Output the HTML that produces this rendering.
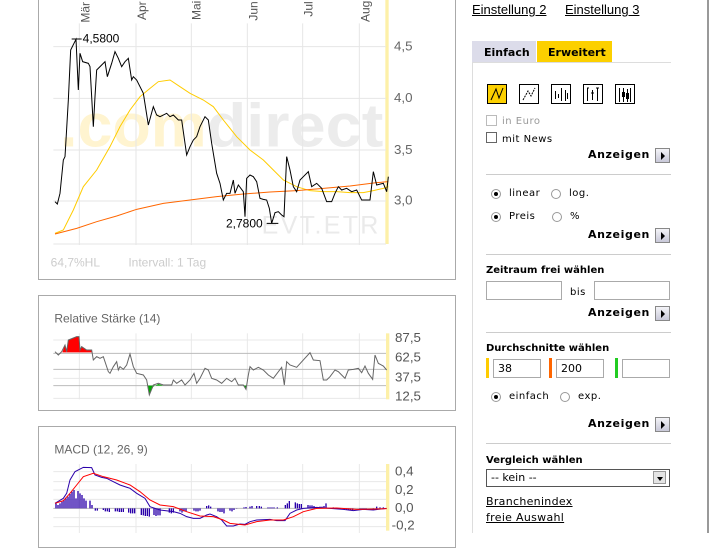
<!DOCTYPE html>
<html><head><meta charset="utf-8"><style>
body{margin:0;width:709px;height:533px;overflow:hidden;background:#fff;font-family:"DejaVu Sans","Liberation Sans",sans-serif;position:relative}
.a{position:absolute}
.box{position:absolute;border:1px solid #aaa;background:#fff}
.lk{position:absolute;font-family:"Liberation Sans",sans-serif;font-size:13px;text-decoration:underline;color:#000}
.sm{position:absolute;font-size:10px;color:#000;letter-spacing:0.5px}
.b{position:absolute;font-size:10px;font-weight:bold;color:#000}
.anz{position:absolute;left:588px;font-size:11px;font-weight:bold;letter-spacing:0.6px}
.btn{position:absolute;left:655px;width:13px;height:13px;border:1px solid #888;background:linear-gradient(#f4f4f8,#c8c8d8)}
.btn:after{content:"";position:absolute;left:5px;top:3px;border-left:4px solid #000;border-top:4px solid transparent;border-bottom:4px solid transparent}
.sep{position:absolute;left:486px;width:185px;height:1px;background:#ccc}
.inp{position:absolute;height:17px;border:1px solid #aaa;background:#fff;font-size:11px;line-height:17px;padding-left:4px;box-sizing:border-box}
.rad{position:absolute;width:10px;height:10px;border-radius:50%;border:1px solid #999;background:#fff;box-sizing:border-box}
.rad.on:after{content:"";position:absolute;left:2px;top:2px;width:4px;height:4px;border-radius:50%;background:#000}
.cb{position:absolute;width:11px;height:11px;border:1px solid #666;box-sizing:border-box;background:#fff}
.ic{position:absolute;top:84px;width:20px;height:20px;border:1px solid #000;box-sizing:border-box}
</style></head><body>
<div class="box" style="left:38px;top:-2px;width:416px;height:280px"></div>
<div class="box" style="left:38px;top:295px;width:416px;height:114px"></div>
<div class="box" style="left:38px;top:426px;width:416px;height:120px"></div>

<svg class="a" style="left:30px;top:0" width="430" height="280" viewBox="0 0 1290 840">
<text x="90" y="440" font-family="Liberation Sans" font-weight="bold" font-size="185" fill="#fff4d0" textLength="440" lengthAdjust="spacingAndGlyphs">.com</text>
<text x="530" y="440" font-family="Liberation Sans" font-weight="bold" font-size="185" fill="#ececec" textLength="530" lengthAdjust="spacingAndGlyphs">direct</text>
<text x="695" y="700" font-family="Liberation Sans" font-size="75" fill="#eaeaea" textLength="350">EVT.ETR</text>
<rect x="1066" y="0" width="10" height="732" fill="#fdf0a8"/>
<g stroke="#e6e6e6" stroke-width="3">
<line x1="70" y1="140" x2="1068" y2="140"/><line x1="70" y1="295" x2="1068" y2="295"/><line x1="70" y1="450" x2="1068" y2="450"/><line x1="70" y1="603" x2="1068" y2="603"/><line x1="70" y1="732" x2="1068" y2="732"/>
<line x1="148" y1="70" x2="148" y2="735"/><line x1="318" y1="70" x2="318" y2="735"/><line x1="484" y1="70" x2="484" y2="735"/><line x1="652" y1="70" x2="652" y2="735"/><line x1="818" y1="70" x2="818" y2="735"/><line x1="988" y1="70" x2="988" y2="735"/>
</g>
<g font-family="Liberation Sans" font-size="36" fill="#555">
<text transform="translate(178,68) rotate(-90)">Mär</text><text transform="translate(348,60) rotate(-90)">Apr</text><text transform="translate(512,60) rotate(-90)">Mai</text><text transform="translate(682,62) rotate(-90)">Jun</text><text transform="translate(848,50) rotate(-90)">Jul</text><text transform="translate(1018,66) rotate(-90)">Aug</text>
</g>
<g font-family="Liberation Sans" font-size="40" fill="#666">
<text x="1092" y="152">4,5</text><text x="1092" y="306">4,0</text><text x="1092" y="462">3,5</text><text x="1092" y="614">3,0</text>
</g>
<polyline fill="none" stroke="#fc0" stroke-width="3" points="75,700 100,690 130,630 160,560 200,510 240,440 270,380 300,330 330,290 360,265 385,245 420,240 450,260 480,280 520,300 550,320 580,360 620,410 660,450 700,480 730,510 760,540 800,560 840,572 880,575 920,575 960,578 1000,578 1030,572 1060,565 1075,560"/>
<polyline fill="none" stroke="#f60" stroke-width="3" points="75,702 140,685 200,665 260,648 320,628 400,610 480,600 560,590 640,582 720,576 800,572 880,565 960,558 1040,548 1075,545"/>
<polyline fill="none" stroke="#000" stroke-width="3" points="75,605 82,612 90,580 100,480 105,470 108,420 115,300 122,150 138,118 145,270 150,160 158,185 175,190 180,200 190,380 195,290 200,210 215,195 225,185 232,230 245,190 255,155 265,175 275,200 285,185 295,175 305,240 310,230 320,240 340,280 355,375 370,320 380,345 390,350 410,340 420,350 430,345 445,360 455,360 470,465 480,440 490,420 500,410 510,380 525,350 535,360 545,430 560,520 570,550 580,600 590,580 600,580 610,540 615,580 625,555 640,575 645,650 650,535 660,525 670,530 680,545 690,595 700,598 710,600 718,625 725,670 735,638 745,635 755,645 762,650 770,470 780,510 790,560 800,575 810,540 820,530 835,515 845,560 860,550 875,565 890,605 905,605 915,580 925,560 935,570 950,565 965,575 980,570 995,600 1020,600 1030,515 1040,555 1060,550 1070,575 1075,530"/>
<path d="M125 117H155M710 670H745" stroke="#000" stroke-width="3"/>
<g font-family="Liberation Sans" font-size="36" fill="#000"><text x="158" y="127">4,5800</text><text x="588" y="682">2,7800</text></g>
<g font-family="Liberation Sans" font-size="36" fill="#ccc"><text x="62" y="800">64,7%HL</text><text x="295" y="800">Intervall: 1 Tag</text></g>
</svg>

<svg class="a" style="left:30px;top:290px" width="430" height="243" viewBox="0 0 1290 729">
<text x="73" y="98" font-family="Liberation Sans" font-size="36" fill="#666">Relative Stärke (14)</text>
<rect x="1068" y="130" width="10" height="198" fill="#fdf0a8"/>
<g stroke="#e8e8e8" stroke-width="3">
<line x1="70" y1="150" x2="1068" y2="150"/><line x1="70" y1="265" x2="1068" y2="265"/><line x1="70" y1="325" x2="1068" y2="325"/>
<line x1="148" y1="130" x2="148" y2="328"/><line x1="318" y1="130" x2="318" y2="328"/><line x1="484" y1="130" x2="484" y2="328"/><line x1="652" y1="130" x2="652" y2="328"/><line x1="818" y1="130" x2="818" y2="328"/><line x1="988" y1="130" x2="988" y2="328"/>
</g>
<g stroke="#bbb" stroke-width="3"><line x1="70" y1="190" x2="1068" y2="190"/><line x1="70" y1="238" x2="1068" y2="238"/><line x1="70" y1="287" x2="1068" y2="287"/></g>
<polygon fill="#f00" points="97,187 105,165 110,187 115,150 140,140 147,140 150,180 155,170 170,180 185,180 187,187"/>
<polygon fill="#0a0" points="352,287 358,315 370,290 385,282 400,287 425,287"/>
<polygon fill="#0a0" points="622,287 625,287 640,287 648,298 650,287"/>
<polyline fill="none" stroke="#666" stroke-width="3" points="75,185 85,195 95,185 105,165 110,185 115,150 140,140 147,140 150,180 155,170 170,180 185,180 190,210 200,200 210,205 220,200 235,245 240,250 250,230 260,215 265,240 270,230 280,238 290,225 300,192 310,230 320,250 340,255 350,270 358,315 370,285 385,280 400,285 425,285 430,270 440,280 455,270 465,285 480,270 492,250 500,280 510,265 525,235 535,240 545,265 560,270 575,280 590,265 605,275 615,265 625,285 640,285 648,298 655,255 660,230 670,240 685,232 700,240 715,255 730,265 755,232 763,285 770,215 780,225 800,232 840,188 850,210 870,212 880,270 890,270 900,260 915,240 925,245 935,255 945,265 955,240 970,238 985,235 995,248 1005,228 1015,250 1028,268 1035,195 1045,220 1060,228 1070,240"/>
<g font-family="Liberation Sans" font-size="40" fill="#555"><text x="1095" y="156">87,5</text><text x="1095" y="215">62,5</text><text x="1095" y="274">37,5</text><text x="1095" y="332">12,5</text></g>

<text x="73" y="490" font-family="Liberation Sans" font-size="36" fill="#666">MACD (12, 26, 9)</text>
<rect x="1068" y="522" width="10" height="200" fill="#fdf0a8"/>
<g stroke="#e8e8e8" stroke-width="3">
<line x1="70" y1="545" x2="1068" y2="545"/><line x1="70" y1="575" x2="1068" y2="575"/><line x1="70" y1="600" x2="1068" y2="600"/><line x1="70" y1="628" x2="1068" y2="628"/><line x1="70" y1="683" x2="1068" y2="683"/><line x1="70" y1="710" x2="1068" y2="710"/>
<line x1="148" y1="522" x2="148" y2="729"/><line x1="318" y1="522" x2="318" y2="729"/><line x1="484" y1="522" x2="484" y2="729"/><line x1="652" y1="522" x2="652" y2="729"/><line x1="818" y1="522" x2="818" y2="729"/><line x1="988" y1="522" x2="988" y2="729"/>
</g>
<line x1="70" y1="655" x2="1068" y2="655" stroke="#bbb" stroke-width="3"/>
<path stroke="#2a00aa" stroke-width="4" d="M78 655V640M84 655V645M90 655V640M96 655V635M102 655V630M108 655V625M114 655V620M120 655V612M126 655V605M132 655V600M138 655V625M144 655V603M150 655V610M156 655V615M162 655V625M168 655V632M180 655V632M186 655V645M196 655V662M202 655V662M220 655V660M226 655V664M232 655V664M238 655V666M256 655V664M262 655V664M268 655V666M274 655V666M280 655V666M296 655V668M302 655V670M308 655V670M314 655V670M334 655V675M340 655V676M346 655V678M352 655V678M358 655V680M372 655V675M378 655V678M384 655V676M390 655V676M418 655V668M424 655V670M430 655V668M450 655V664M456 655V668M462 655V664M468 655V664M492 655V662M498 655V664M504 655V664M510 655V662M530 655V648M536 655V646M542 655V650M564 655V664M570 655V666M576 655V666M582 655V670M600 655V662M606 655V664M612 655V660M620 655V656M642 655V652M648 655V651M660 655V650M666 655V648M680 655V648M688 655V648M694 655V650M714 655V652M720 655V652M726 655V652M732 655V652M742 655V652M766 655V645M772 655V640M778 655V633M796 655V637M802 655V640M808 655V642M814 655V642M834 655V645M840 655V646M846 655V646M852 655V648M870 655V650M876 655V650M882 655V648M888 655V640M910 655V652M930 655V657M950 655V660M956 655V660M962 655V660M968 655V660M990 655V658M996 655V658M1002 655V657M1008 655V658M1030 655V660M1040 655V650M1050 655V652M1060 655V652"/>
<polyline fill="none" stroke="#2a00aa" stroke-width="3" points="75,640 100,625 110,610 120,570 135,545 160,532 185,533 195,555 215,562 230,565 250,575 270,585 300,595 320,610 345,625 360,650 390,660 430,665 450,670 470,680 490,685 510,685 530,675 540,672 560,680 575,690 590,708 610,708 630,702 645,703 660,695 680,690 720,688 740,692 765,692 780,670 800,660 820,655 860,652 900,655 940,658 970,662 1000,658 1030,660 1070,655"/>
<polyline fill="none" stroke="#f00" stroke-width="3" points="75,640 100,632 120,610 140,585 160,560 190,550 220,560 260,570 300,585 330,605 360,630 390,645 430,650 470,665 510,678 550,680 580,690 600,700 645,705 680,695 720,690 760,690 790,680 820,665 860,655 920,654 980,658 1040,657 1070,656"/>
<g font-family="Liberation Sans" font-size="40" fill="#555"><text x="1095" y="557">0,4</text><text x="1095" y="612">0,2</text><text x="1095" y="666">0,0</text><text x="1085" y="718">-0,2</text></g>
</svg>

<div class="a" style="left:707px;top:0;width:2px;height:533px;background:#999"></div>
<div class="lk" style="left:472px;top:2px">Einstellung 2</div>
<div class="lk" style="left:565px;top:2px">Einstellung 3</div>
<div class="a" style="left:472px;top:41px;width:64px;height:21px;background:#dcdcea"></div>
<div class="a" style="left:537px;top:41px;width:75px;height:21px;background:#fcd000"></div>
<div class="b" style="left:484px;top:46px;font-size:11px">Einfach</div>
<div class="b" style="left:548px;top:46px;font-size:11px">Erweitert</div>
<div class="a" style="left:472px;top:62px;width:199px;height:1px;background:#ddd"></div>
<div class="a" style="left:472px;top:62px;width:1px;height:471px;background:#ddd"></div>

<div class="ic" style="left:487px;background:#fcd000"><svg width="18" height="18"><polyline points="3,15 8,4 11,13 15,3" fill="none" stroke="#000"/></svg></div>
<div class="ic" style="left:519px"><svg width="18" height="18"><polyline points="3,15 8,6 11,11 15,3" fill="none" stroke="#000" stroke-dasharray="2 1"/></svg></div>
<div class="ic" style="left:551px"><svg width="18" height="18"><path d="M3.5 6v8M6.5 9v4M9.5 3v13M13.5 5v11M15.5 8v6" stroke="#000"/></svg></div>
<div class="ic" style="left:583px"><svg width="18" height="18"><path d="M3.5 3v13M3 3h2M8.5 5v10M7 8h3M13.5 3v13M12 3h3" stroke="#000"/></svg></div>
<div class="ic" style="left:615px"><svg width="18" height="18"><path d="M3.5 3v14M7.5 3v14M11.5 4v13M14.5 3v14" stroke="#000"/><rect x="6" y="7" width="3" height="5"/><rect x="10" y="8" width="3" height="6"/></svg></div>

<div class="cb" style="left:486px;top:115px;border-color:#bbb"></div>
<div class="sm" style="left:502px;top:116px;color:#999">in Euro</div>
<div class="cb" style="left:486px;top:132px"></div>
<div class="sm" style="left:502px;top:134px">mit News</div>
<div class="anz" style="top:148px">Anzeigen</div><div class="btn" style="top:148px"></div>
<div class="sep" style="top:174px"></div>
<div class="rad on" style="left:491px;top:189px"></div><div class="sm" style="left:509px;top:188px">linear</div>
<div class="rad" style="left:551px;top:189px"></div><div class="sm" style="left:569px;top:188px">log.</div>
<div class="rad on" style="left:491px;top:212px"></div><div class="sm" style="left:509px;top:211px">Preis</div>
<div class="rad" style="left:552px;top:212px"></div><div class="sm" style="left:570px;top:211px">%</div>
<div class="anz" style="top:228px">Anzeigen</div><div class="btn" style="top:228px"></div>
<div class="sep" style="top:254px"></div>
<div class="b" style="left:486px;top:265px">Zeitraum frei wählen</div>
<div class="inp" style="left:486px;top:281px;width:76px;height:19px"></div>
<div class="sm" style="left:570px;top:287px">bis</div>
<div class="inp" style="left:594px;top:281px;width:76px;height:19px"></div>
<div class="anz" style="top:306px">Anzeigen</div><div class="btn" style="top:306px"></div>
<div class="sep" style="top:332px"></div>
<div class="b" style="left:486px;top:343px">Durchschnitte wählen</div>
<div class="a" style="left:486px;top:358px;width:3px;height:20px;background:#fc0"></div>
<div class="inp" style="left:493px;top:359px;width:48px;height:19px">38</div>
<div class="a" style="left:549px;top:358px;width:3px;height:20px;background:#f60"></div>
<div class="inp" style="left:556px;top:359px;width:48px;height:19px">200</div>
<div class="a" style="left:615px;top:358px;width:3px;height:20px;background:#2c2"></div>
<div class="inp" style="left:622px;top:359px;width:48px;height:19px"></div>
<div class="rad on" style="left:491px;top:392px"></div><div class="sm" style="left:509px;top:391px">einfach</div>
<div class="rad" style="left:560px;top:392px"></div><div class="sm" style="left:578px;top:391px">exp.</div>
<div class="anz" style="top:417px">Anzeigen</div><div class="btn" style="top:417px"></div>
<div class="sep" style="top:443px"></div>
<div class="b" style="left:486px;top:455px">Vergleich wählen</div>
<div class="inp" style="left:486px;top:469px;width:184px;height:18px;border-color:#555;line-height:15px">-- kein --</div>
<div class="a" style="left:653px;top:471px;width:13px;height:13px;border:1px solid #999;box-sizing:border-box;background:#e4e4e4"><div style="position:absolute;left:3px;top:5px;border-top:4px solid #000;border-left:3px solid transparent;border-right:3px solid transparent"></div></div>
<div class="sm" style="left:486px;top:495px;font-size:11px;text-decoration:underline;letter-spacing:0.3px">Branchenindex</div>
<div class="sm" style="left:486px;top:511px;font-size:11px;text-decoration:underline;letter-spacing:0.3px">freie Auswahl</div>
</body></html>
